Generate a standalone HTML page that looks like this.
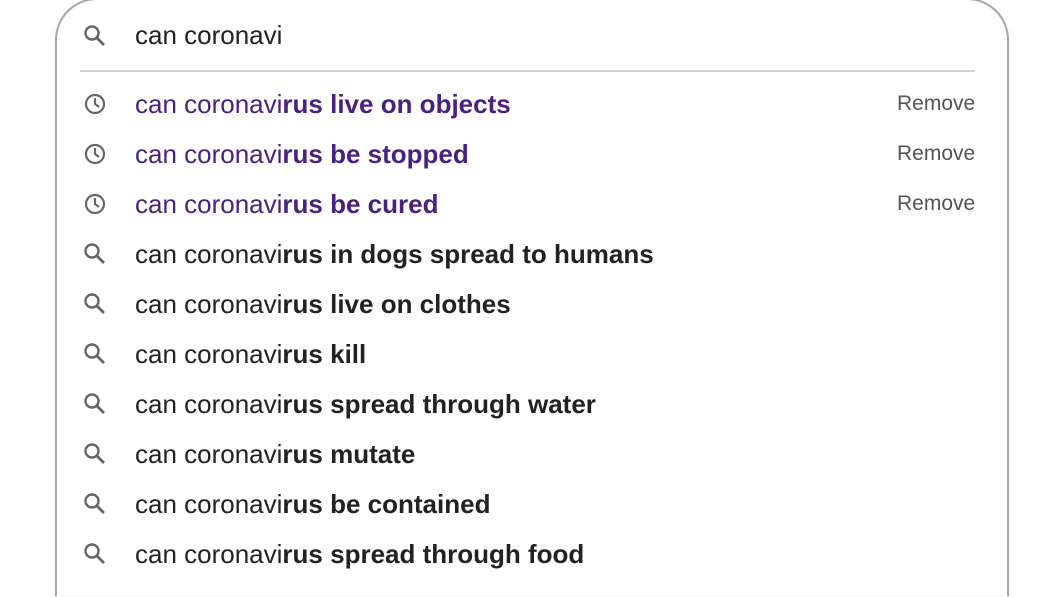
<!DOCTYPE html>
<html style="overflow:hidden;height:597px"><head><style>
body{margin:0;width:1061px;height:597px;background:#fff;overflow:hidden;position:relative;font-family:"Liberation Sans",Arial,sans-serif;}
.box{position:absolute;left:55px;top:-2px;width:950px;height:596px;border:2px solid #a8a8a8;border-bottom:none;border-radius:42px 42px 0 0;background:#fff;box-shadow:0 0 3px rgba(0,0,0,.08);}
.wrap{position:absolute;left:0;top:0;width:1061px;height:597px;overflow:hidden;}
.div{position:absolute;left:80px;top:70px;width:895px;height:2px;background:#cfcfcf;}
.q{position:absolute;left:135px;top:20px;font-size:26px;color:#222;}
.row{position:absolute;left:135px;font-size:26px;color:#222;white-space:nowrap;}
.row b{font-weight:bold;}
.p{color:#4a2080;}
.ic{position:absolute;left:82px;}
.rm{position:absolute;left:897px;font-size:21px;color:#555;}
</style></head><body>
<div class="wrap">
<div class="box"></div>
<div class="div"></div>
<svg class="ic" style="top:23px" width="26" height="26" viewBox="0 0 26 26"><circle cx="10" cy="10" r="6.5" fill="none" stroke="#666" stroke-width="2.4"/><path d="M15 15l7 7" stroke="#666" stroke-width="2.8"/></svg>
<div class="q">can coronavi</div>

<svg class="ic" style="top:91px" width="26" height="26" viewBox="0 0 26 26"><circle cx="13" cy="13" r="9" fill="none" stroke="#666" stroke-width="2.2"/><path d="M13 7v6l4 3" fill="none" stroke="#666" stroke-width="2.2"/></svg>
<div class="row p" style="top:89px">can coronavi<b>rus live on objects</b></div>
<div class="rm" style="top:92px">Remove</div>

<svg class="ic" style="top:141px" width="26" height="26" viewBox="0 0 26 26"><circle cx="13" cy="13" r="9" fill="none" stroke="#666" stroke-width="2.2"/><path d="M13 7v6l4 3" fill="none" stroke="#666" stroke-width="2.2"/></svg>
<div class="row p" style="top:139px">can coronavi<b>rus be stopped</b></div>
<div class="rm" style="top:142px">Remove</div>

<svg class="ic" style="top:191px" width="26" height="26" viewBox="0 0 26 26"><circle cx="13" cy="13" r="9" fill="none" stroke="#666" stroke-width="2.2"/><path d="M13 7v6l4 3" fill="none" stroke="#666" stroke-width="2.2"/></svg>
<div class="row p" style="top:189px">can coronavi<b>rus be cured</b></div>
<div class="rm" style="top:192px">Remove</div>

<svg class="ic" style="top:241px" width="26" height="26" viewBox="0 0 26 26"><circle cx="10" cy="10" r="6.5" fill="none" stroke="#666" stroke-width="2.4"/><path d="M15 15l7 7" stroke="#666" stroke-width="2.8"/></svg>
<div class="row" style="top:239px">can coronavi<b>rus in dogs spread to humans</b></div>

<svg class="ic" style="top:291px" width="26" height="26" viewBox="0 0 26 26"><circle cx="10" cy="10" r="6.5" fill="none" stroke="#666" stroke-width="2.4"/><path d="M15 15l7 7" stroke="#666" stroke-width="2.8"/></svg>
<div class="row" style="top:289px">can coronavi<b>rus live on clothes</b></div>

<svg class="ic" style="top:341px" width="26" height="26" viewBox="0 0 26 26"><circle cx="10" cy="10" r="6.5" fill="none" stroke="#666" stroke-width="2.4"/><path d="M15 15l7 7" stroke="#666" stroke-width="2.8"/></svg>
<div class="row" style="top:339px">can coronavi<b>rus kill</b></div>

<svg class="ic" style="top:391px" width="26" height="26" viewBox="0 0 26 26"><circle cx="10" cy="10" r="6.5" fill="none" stroke="#666" stroke-width="2.4"/><path d="M15 15l7 7" stroke="#666" stroke-width="2.8"/></svg>
<div class="row" style="top:389px">can coronavi<b>rus spread through water</b></div>

<svg class="ic" style="top:441px" width="26" height="26" viewBox="0 0 26 26"><circle cx="10" cy="10" r="6.5" fill="none" stroke="#666" stroke-width="2.4"/><path d="M15 15l7 7" stroke="#666" stroke-width="2.8"/></svg>
<div class="row" style="top:439px">can coronavi<b>rus mutate</b></div>

<svg class="ic" style="top:491px" width="26" height="26" viewBox="0 0 26 26"><circle cx="10" cy="10" r="6.5" fill="none" stroke="#666" stroke-width="2.4"/><path d="M15 15l7 7" stroke="#666" stroke-width="2.8"/></svg>
<div class="row" style="top:489px">can coronavi<b>rus be contained</b></div>

<svg class="ic" style="top:541px" width="26" height="26" viewBox="0 0 26 26"><circle cx="10" cy="10" r="6.5" fill="none" stroke="#666" stroke-width="2.4"/><path d="M15 15l7 7" stroke="#666" stroke-width="2.8"/></svg>
<div class="row" style="top:539px">can coronavi<b>rus spread through food</b></div>
</div>
</body></html>
